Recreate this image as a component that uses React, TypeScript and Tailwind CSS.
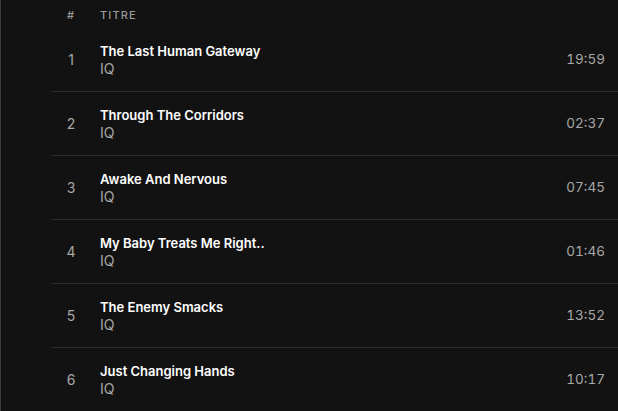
import React from 'react';

const tracks = [
  { title: 'The Last Human Gateway', artist: 'IQ', duration: '19:59' },
  { title: 'Through The Corridors', artist: 'IQ', duration: '02:37' },
  { title: 'Awake And Nervous', artist: 'IQ', duration: '07:45' },
  { title: 'My Baby Treats Me Right..', artist: 'IQ', duration: '01:46' },
  { title: 'The Enemy Smacks', artist: 'IQ', duration: '13:52' },
  { title: 'Just Changing Hands', artist: 'IQ', duration: '10:17' },
];

const App: React.FC = () => {
  return (
    <div
      className="h-[411px] w-[618px] overflow-hidden bg-[#121212] border-l border-[#3c3c3c]"
      style={{ fontFamily: 'Inter, "Noto Sans", sans-serif' }}
    >
      <div className="ml-[50px]">
        {/* header */}
        <div className="flex h-[28px] items-center pt-[3px] text-[11px] font-medium tracking-[0.1em] text-[#9a9a9a]">
          <span className="w-[40px] text-center">#</span>
          <span className="ml-[9px]">TITRE</span>
        </div>

        {tracks.map((track, i) => (
          <div
            key={i}
            className="flex h-[64px] items-center border-b border-[#2a2a2a] pr-[13px]"
          >
            <span className="w-[40px] text-center text-[14px] text-[#a7a7a7]">{i + 1}</span>
            <div className="ml-[9px] flex flex-1 flex-col">
              <span className="text-[13px] leading-[18px] font-semibold text-white">
                {track.title}
              </span>
              <span className="text-[14px] leading-[18px] text-[#a7a7a7]">{track.artist}</span>
            </div>
            <span className="text-[13.5px] text-[#a7a7a7] tabular-nums">{track.duration}</span>
          </div>
        ))}
      </div>
    </div>
  );
};

export default App;
